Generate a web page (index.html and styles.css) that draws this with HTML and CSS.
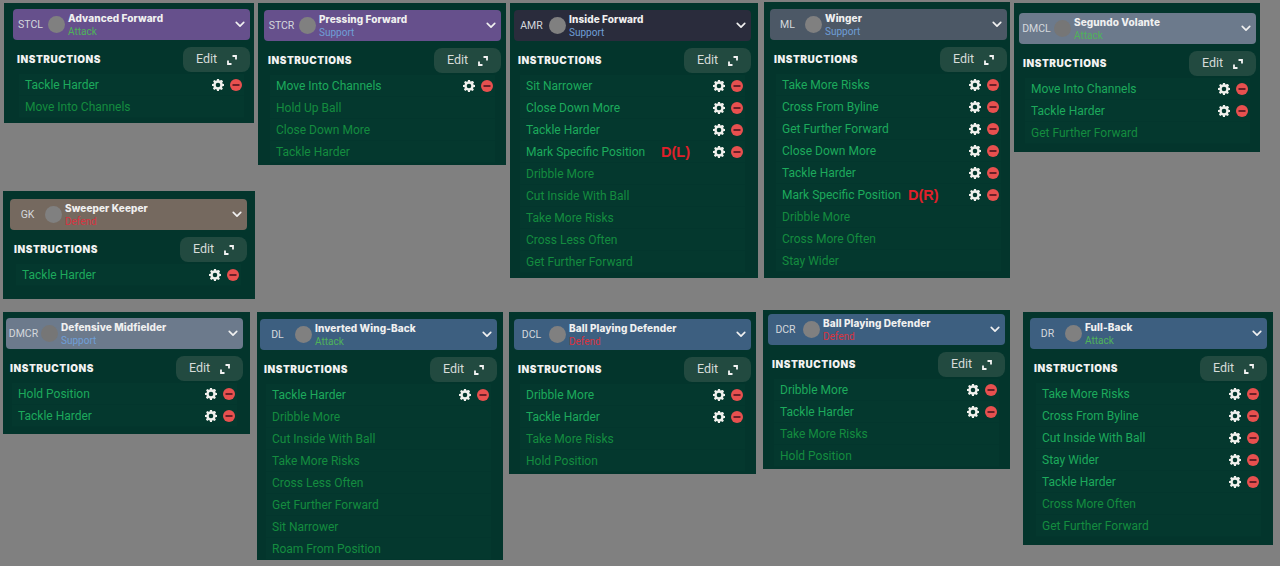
FILE: index.html
```html
<!DOCTYPE html>
<html lang="en">

<head>
    <meta charset="UTF-8">
    <meta name="viewport" content="width=device-width, initial-scale=1.0">
    <title>Player Instructions</title>
    <link rel="stylesheet" href="styles.css">
</head>

<body>
    <svg class="defs" width="0" height="0">
        <symbol id="chevron" viewBox="0 0 12 8">
            <path d="M1.500 1.500 6 6l4.500-4.500" fill="none" stroke="currentColor" stroke-width="2" stroke-linecap="round" stroke-linejoin="round"/>
        </symbol>
        <symbol id="expand" viewBox="0 0 10 10">
            <path d="M5.500 1H9v3.500M4.500 9H1V5.500" fill="none" stroke="currentColor" stroke-width="1.800"/>
        </symbol>
        <symbol id="gear" viewBox="0 0 12 12">
            <path fill-rule="evenodd" fill="currentColor" d="M5 0h2l.3 1.600 1-.4L9.700 0.900l1.400 1.400-.9 1.500.4 1L12 5v2l-1.600.3-.4 1 .9 1.400-1.400 1.400-1.400-.9-1 .4L7 12H5l-.3-1.600-1-.4-1.400.9-1.400-1.400.9-1.400-.4-1L0 7V5l1.600-.3.400-1-.9-1.400L2.300.9l1.400.9 1-.4zM6 3.700a2.300 2.300 0 1 0 0 4.600 2.300 2.300 0 0 0 0-4.600z"/>
        </symbol>
        <symbol id="remove" viewBox="0 0 12 12">
            <circle cx="6" cy="6" r="6" fill="#e8504f"/>
            <rect x="2.500" y="5" width="7" height="2" fill="#6a2028"/>
        </symbol>
    </svg>

    <section class="panel stcl">
        <header class="role-bar purple">
            <span class="pos">STCL</span><span class="dot"></span>
            <div class="role-name"><strong>Advanced Forward</strong><em class="attack">Attack</em></div>
            <svg class="chev"><use href="#chevron"/></svg>
        </header>
        <div class="instr-head"><h2>INSTRUCTIONS</h2><button class="edit">Edit <svg><use href="#expand"/></svg></button></div>
        <ul>
            <li class="on">Tackle Harder<span class="tools"><svg><use href="#gear"/></svg><svg><use href="#remove"/></svg></span></li>
            <li>Move Into Channels</li>
        </ul>
    </section>

    <section class="panel stcr">
        <header class="role-bar purple">
            <span class="pos">STCR</span><span class="dot"></span>
            <div class="role-name"><strong>Pressing Forward</strong><em class="support">Support</em></div>
            <svg class="chev"><use href="#chevron"/></svg>
        </header>
        <div class="instr-head"><h2>INSTRUCTIONS</h2><button class="edit">Edit <svg><use href="#expand"/></svg></button></div>
        <ul>
            <li class="on">Move Into Channels<span class="tools"><svg><use href="#gear"/></svg><svg><use href="#remove"/></svg></span></li>
            <li>Hold Up Ball</li>
            <li>Close Down More</li>
            <li>Tackle Harder</li>
        </ul>
    </section>

    <section class="panel amr">
        <header class="role-bar dark">
            <span class="pos">AMR</span><span class="dot"></span>
            <div class="role-name"><strong>Inside Forward</strong><em class="support">Support</em></div>
            <svg class="chev"><use href="#chevron"/></svg>
        </header>
        <div class="instr-head"><h2>INSTRUCTIONS</h2><button class="edit">Edit <svg><use href="#expand"/></svg></button></div>
        <ul>
            <li class="on">Sit Narrower<span class="tools"><svg><use href="#gear"/></svg><svg><use href="#remove"/></svg></span></li>
            <li class="on">Close Down More<span class="tools"><svg><use href="#gear"/></svg><svg><use href="#remove"/></svg></span></li>
            <li class="on">Tackle Harder<span class="tools"><svg><use href="#gear"/></svg><svg><use href="#remove"/></svg></span></li>
            <li class="on">Mark Specific Position<b class="mark mark-l">D(L)</b><span class="tools"><svg><use href="#gear"/></svg><svg><use href="#remove"/></svg></span></li>
            <li>Dribble More</li>
            <li>Cut Inside With Ball</li>
            <li>Take More Risks</li>
            <li>Cross Less Often</li>
            <li>Get Further Forward</li>
        </ul>
    </section>

    <section class="panel ml">
        <header class="role-bar slate">
            <span class="pos">ML</span><span class="dot"></span>
            <div class="role-name"><strong>Winger</strong><em class="support">Support</em></div>
            <svg class="chev"><use href="#chevron"/></svg>
        </header>
        <div class="instr-head"><h2>INSTRUCTIONS</h2><button class="edit">Edit <svg><use href="#expand"/></svg></button></div>
        <ul>
            <li class="on">Take More Risks<span class="tools"><svg><use href="#gear"/></svg><svg><use href="#remove"/></svg></span></li>
            <li class="on">Cross From Byline<span class="tools"><svg><use href="#gear"/></svg><svg><use href="#remove"/></svg></span></li>
            <li class="on">Get Further Forward<span class="tools"><svg><use href="#gear"/></svg><svg><use href="#remove"/></svg></span></li>
            <li class="on">Close Down More<span class="tools"><svg><use href="#gear"/></svg><svg><use href="#remove"/></svg></span></li>
            <li class="on">Tackle Harder<span class="tools"><svg><use href="#gear"/></svg><svg><use href="#remove"/></svg></span></li>
            <li class="on">Mark Specific Position<b class="mark mark-r">D(R)</b><span class="tools"><svg><use href="#gear"/></svg><svg><use href="#remove"/></svg></span></li>
            <li>Dribble More</li>
            <li>Cross More Often</li>
            <li>Stay Wider</li>
        </ul>
    </section>

    <section class="panel dmcl">
        <header class="role-bar steel">
            <span class="pos">DMCL</span><span class="dot dim"></span>
            <div class="role-name"><strong>Segundo Volante</strong><em class="attack">Attack</em></div>
            <svg class="chev"><use href="#chevron"/></svg>
        </header>
        <div class="instr-head"><h2>INSTRUCTIONS</h2><button class="edit">Edit <svg><use href="#expand"/></svg></button></div>
        <ul>
            <li class="on">Move Into Channels<span class="tools"><svg><use href="#gear"/></svg><svg><use href="#remove"/></svg></span></li>
            <li class="on">Tackle Harder<span class="tools"><svg><use href="#gear"/></svg><svg><use href="#remove"/></svg></span></li>
            <li>Get Further Forward</li>
        </ul>
    </section>

    <section class="panel gk">
        <header class="role-bar brown">
            <span class="pos">GK</span><span class="dot"></span>
            <div class="role-name"><strong>Sweeper Keeper</strong><em class="defend">Defend</em></div>
            <svg class="chev"><use href="#chevron"/></svg>
        </header>
        <div class="instr-head"><h2>INSTRUCTIONS</h2><button class="edit">Edit <svg><use href="#expand"/></svg></button></div>
        <ul>
            <li class="on">Tackle Harder<span class="tools"><svg><use href="#gear"/></svg><svg><use href="#remove"/></svg></span></li>
        </ul>
    </section>

    <section class="panel dmcr">
        <header class="role-bar steel">
            <span class="pos">DMCR</span><span class="dot dim"></span>
            <div class="role-name"><strong>Defensive Midfielder</strong><em class="support">Support</em></div>
            <svg class="chev"><use href="#chevron"/></svg>
        </header>
        <div class="instr-head"><h2>INSTRUCTIONS</h2><button class="edit">Edit <svg><use href="#expand"/></svg></button></div>
        <ul>
            <li class="on">Hold Position<span class="tools"><svg><use href="#gear"/></svg><svg><use href="#remove"/></svg></span></li>
            <li class="on">Tackle Harder<span class="tools"><svg><use href="#gear"/></svg><svg><use href="#remove"/></svg></span></li>
        </ul>
    </section>

    <section class="panel dl">
        <header class="role-bar blue">
            <span class="pos">DL</span><span class="dot"></span>
            <div class="role-name"><strong>Inverted Wing-Back</strong><em class="attack">Attack</em></div>
            <svg class="chev"><use href="#chevron"/></svg>
        </header>
        <div class="instr-head"><h2>INSTRUCTIONS</h2><button class="edit">Edit <svg><use href="#expand"/></svg></button></div>
        <ul>
            <li class="on">Tackle Harder<span class="tools"><svg><use href="#gear"/></svg><svg><use href="#remove"/></svg></span></li>
            <li>Dribble More</li>
            <li>Cut Inside With Ball</li>
            <li>Take More Risks</li>
            <li>Cross Less Often</li>
            <li>Get Further Forward</li>
            <li>Sit Narrower</li>
            <li>Roam From Position</li>
        </ul>
    </section>

    <section class="panel dcl">
        <header class="role-bar blue">
            <span class="pos">DCL</span><span class="dot"></span>
            <div class="role-name"><strong>Ball Playing Defender</strong><em class="defend">Defend</em></div>
            <svg class="chev"><use href="#chevron"/></svg>
        </header>
        <div class="instr-head"><h2>INSTRUCTIONS</h2><button class="edit">Edit <svg><use href="#expand"/></svg></button></div>
        <ul>
            <li class="on">Dribble More<span class="tools"><svg><use href="#gear"/></svg><svg><use href="#remove"/></svg></span></li>
            <li class="on">Tackle Harder<span class="tools"><svg><use href="#gear"/></svg><svg><use href="#remove"/></svg></span></li>
            <li>Take More Risks</li>
            <li>Hold Position</li>
        </ul>
    </section>

    <section class="panel dcr">
        <header class="role-bar blue">
            <span class="pos">DCR</span><span class="dot"></span>
            <div class="role-name"><strong>Ball Playing Defender</strong><em class="defend">Defend</em></div>
            <svg class="chev"><use href="#chevron"/></svg>
        </header>
        <div class="instr-head"><h2>INSTRUCTIONS</h2><button class="edit">Edit <svg><use href="#expand"/></svg></button></div>
        <ul>
            <li class="on">Dribble More<span class="tools"><svg><use href="#gear"/></svg><svg><use href="#remove"/></svg></span></li>
            <li class="on">Tackle Harder<span class="tools"><svg><use href="#gear"/></svg><svg><use href="#remove"/></svg></span></li>
            <li>Take More Risks</li>
            <li>Hold Position</li>
        </ul>
    </section>

    <section class="panel dr">
        <header class="role-bar blue">
            <span class="pos">DR</span><span class="dot"></span>
            <div class="role-name"><strong>Full-Back</strong><em class="attack">Attack</em></div>
            <svg class="chev"><use href="#chevron"/></svg>
        </header>
        <div class="instr-head"><h2>INSTRUCTIONS</h2><button class="edit">Edit <svg><use href="#expand"/></svg></button></div>
        <ul>
            <li class="on">Take More Risks<span class="tools"><svg><use href="#gear"/></svg><svg><use href="#remove"/></svg></span></li>
            <li class="on">Cross From Byline<span class="tools"><svg><use href="#gear"/></svg><svg><use href="#remove"/></svg></span></li>
            <li class="on">Cut Inside With Ball<span class="tools"><svg><use href="#gear"/></svg><svg><use href="#remove"/></svg></span></li>
            <li class="on">Stay Wider<span class="tools"><svg><use href="#gear"/></svg><svg><use href="#remove"/></svg></span></li>
            <li class="on">Tackle Harder<span class="tools"><svg><use href="#gear"/></svg><svg><use href="#remove"/></svg></span></li>
            <li>Cross More Often</li>
            <li>Get Further Forward</li>
        </ul>
    </section>
</body>

</html>
```

FILE: styles.css
```css
body {
    margin: 0;
    height: 566px;
    overflow: hidden;
    position: relative;
    background-color: #808080;
    font-family: Roboto, "Liberation Sans", sans-serif;
}

.defs {
    position: absolute;
}

/* panels sit on a free canvas, each one pasted where it was cropped */
.panel {
    position: absolute;
    box-sizing: border-box;
    width: 247px;
    background-color: #03352c;
}

.stcl { left: 4px; top: 3px; width: 250px; padding: 6px 0 5px 9px; }
.stcr { left: 258px; top: 3px; width: 248px; padding: 7px 0 2px 6px; }
.amr { left: 510px; top: 3px; width: 248px; padding: 7px 0 5px 4px; }
.ml { left: 764px; top: 2px; width: 246px; padding: 7px 0 6px 6px; }
.dmcl { left: 1014px; top: 3px; width: 246px; padding: 10px 0 8px 5px; }
.gk { left: 3px; top: 191px; width: 252px; padding: 8px 0 13px 7px; }
.dmcr { left: 3px; top: 312px; padding: 6px 0 7px 3px; }
.dl { left: 257px; top: 312px; width: 246px; padding: 7px 0 0 3px; }
.dcl { left: 509px; top: 312px; padding: 7px 0 2px 5px; }
.dcr { left: 763px; top: 310px; padding: 4px 0 2px 5px; }
.dr { left: 1023px; top: 312px; width: 250px; padding: 6px 0 8px 7px; }

.role-bar {
    display: flex;
    align-items: center;
    width: 237px;
    height: 31px;
    border-radius: 4px;
    color: #e6e6e6;
}

.purple { background-color: #66508c; }
.dark { background-color: #2a2c3c; }
.slate { background-color: #4c5866; }
.steel { background-color: #6c7a8c; }
.brown { background-color: #75695f; }
.blue { background-color: #3d5f80; }

.pos {
    width: 35px;
    text-align: center;
    font-size: 10.5px;
    color: #d4d8dc;
}

.dot {
    width: 17px;
    height: 17px;
    margin-right: 3px;
    border-radius: 50%;
    background-color: #808080;
}

.dot.dim {
    background-color: #767676;
}

.role-name {
    flex: 1;
    display: flex;
    flex-direction: column;
    line-height: 13px;
}

.role-name strong {
    font-family: Inter, "Liberation Sans", sans-serif;
    font-size: 10px;
    font-weight: 800;
    letter-spacing: 0.1px;
    color: #f0f0f0;
}

.role-name em {
    font-size: 10px;
    font-style: normal;
}

.attack { color: #4fb35a; }
.support { color: #6f9fd8; }
.defend { color: #d8343f; }

.chev {
    width: 10px;
    height: 7px;
    margin-right: 5px;
    color: #f0f0f0;
}

.instr-head {
    display: flex;
    align-items: center;
    justify-content: space-between;
    width: 237px;
    height: 25px;
    margin-top: 7px;
    margin-bottom: 2px;
}

.instr-head h2 {
    margin: 0 0 2px 4px;
    font-family: Inter, "Liberation Sans", sans-serif;
    font-size: 10px;
    font-weight: 900;
    letter-spacing: 0.55px;
    color: #f2f2f2;
}

.edit {
    display: flex;
    align-items: center;
    justify-content: space-between;
    box-sizing: border-box;
    width: 67px;
    height: 25px;
    padding: 0 13px 2px;
    border: none;
    border-radius: 8px;
    background-color: #224a40;
    color: #d6dcd9;
    font-family: inherit;
    font-size: 12.5px;
}

.edit svg {
    width: 10px;
    height: 10px;
    margin-top: 3px;
    color: #f4f4f4;
}

ul {
    list-style: none;
    margin: 0;
    padding: 0;
}

li {
    position: relative;
    display: flex;
    align-items: center;
    width: 225px;
    height: 22px;
    margin-left: 6px;
    padding-left: 6px;
    box-sizing: border-box;
    background-color: #04382e;
    border-bottom: 1px solid #03362d;
    font-size: 12px;
    color: #148c3f;
}

li.on {
    color: #1daa5c;
}

.tools {
    display: flex;
    align-items: center;
    gap: 6px;
    margin-left: auto;
    margin-right: 2px;
    color: #f0f0ec;
}

.tools svg {
    width: 12px;
    height: 12px;
}

.mark {
    position: absolute;
    font-size: 14.5px;
    font-weight: 700;
    font-family: "Liberation Sans", sans-serif;
    color: #e0202a;
}

.mark-l { left: 141px; }
.mark-r { left: 132px; }
```
